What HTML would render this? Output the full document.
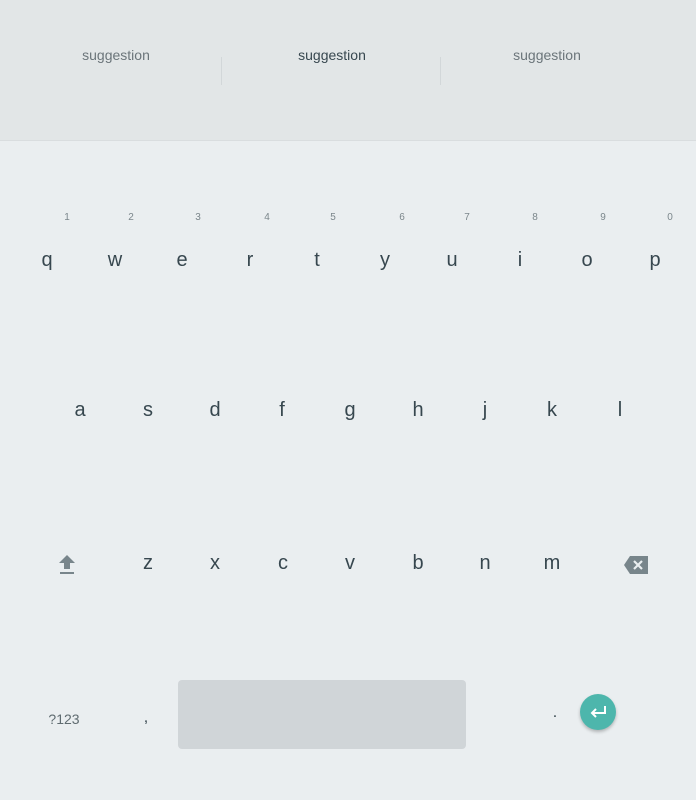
<!DOCTYPE html>
<html><head><style>
html,body{margin:0;padding:0}
body{width:696px;height:800px;position:relative;overflow:hidden;background:#eaeef0;font-family:"Liberation Sans",sans-serif;}
.top{position:absolute;left:0;top:0;width:696px;height:140px;background:#e2e6e7;border-bottom:1px solid #d9dddf}
.s{position:absolute;top:47px;font-size:14px;color:#6b757a;transform:translateX(-50%)}
.div{position:absolute;top:57px;width:1px;height:28px;background:#d2d7d9}
.k{position:absolute;font-size:20px;color:#37474f;transform:translate(-50%,-50%);line-height:1}
.n{position:absolute;font-size:10px;color:#7b868b;transform:translate(-50%,-50%);line-height:1}
</style></head><body>
<div class="top">
<div class="s" style="left:116px">suggestion</div>
<div class="s" style="left:332px;color:#37474f">suggestion</div>
<div class="s" style="left:547px">suggestion</div>
<div class="div" style="left:221px"></div>
<div class="div" style="left:440px"></div>
</div>
<div class="n" style="left:67px;top:218px">1</div>
<div class="n" style="left:131px;top:218px">2</div>
<div class="n" style="left:198px;top:218px">3</div>
<div class="n" style="left:267px;top:218px">4</div>
<div class="n" style="left:333px;top:218px">5</div>
<div class="n" style="left:402px;top:218px">6</div>
<div class="n" style="left:467px;top:218px">7</div>
<div class="n" style="left:535px;top:218px">8</div>
<div class="n" style="left:603px;top:218px">9</div>
<div class="n" style="left:670px;top:218px">0</div>

<div class="k" style="left:47px;top:260px">q</div>
<div class="k" style="left:115px;top:260px">w</div>
<div class="k" style="left:182px;top:260px">e</div>
<div class="k" style="left:250px;top:260px">r</div>
<div class="k" style="left:317px;top:260px">t</div>
<div class="k" style="left:385px;top:260px">y</div>
<div class="k" style="left:452px;top:260px">u</div>
<div class="k" style="left:520px;top:260px">i</div>
<div class="k" style="left:587px;top:260px">o</div>
<div class="k" style="left:655px;top:260px">p</div>

<div class="k" style="left:80px;top:410px">a</div>
<div class="k" style="left:148px;top:410px">s</div>
<div class="k" style="left:215px;top:410px">d</div>
<div class="k" style="left:282px;top:410px">f</div>
<div class="k" style="left:350px;top:410px">g</div>
<div class="k" style="left:418px;top:410px">h</div>
<div class="k" style="left:485px;top:410px">j</div>
<div class="k" style="left:552px;top:410px">k</div>
<div class="k" style="left:620px;top:410px">l</div>

<svg style="position:absolute;left:57px;top:554px" width="20" height="22" viewBox="0 0 20 22"><path d="M10 1 L18 9 L13 9 L13 15 L7 15 L7 9 L2 9 Z" fill="#78858b"/><rect x="3" y="18" width="14" height="2" fill="#78858b"/></svg>
<div class="k" style="left:148px;top:563px">z</div>
<div class="k" style="left:215px;top:563px">x</div>
<div class="k" style="left:283px;top:563px">c</div>
<div class="k" style="left:350px;top:563px">v</div>
<div class="k" style="left:418px;top:563px">b</div>
<div class="k" style="left:485px;top:563px">n</div>
<div class="k" style="left:552px;top:563px">m</div>
<svg style="position:absolute;left:624px;top:556px" width="25" height="18" viewBox="0 0 25 18"><path d="M6 0 H24 V18 H6 L0 9 Z" fill="#78858b"/><path d="M10 5 L18 13 M18 5 L10 13" stroke="#eaeef0" stroke-width="2.2"/></svg>

<div class="k" style="left:64px;top:719px;font-size:14px;color:#5f6b70">?123</div>
<div class="k" style="left:146px;top:718px;font-size:16px">,</div>
<div style="position:absolute;left:178px;top:680px;width:288px;height:69px;background:#d0d5d8;border-radius:4px"></div>
<div class="k" style="left:555px;top:713px;font-size:16px">.</div>
<div style="position:absolute;left:580px;top:694px;width:36px;height:36px;border-radius:50%;background:#4db6ac;box-shadow:0 2px 3px rgba(0,0,0,.25)"></div>
<svg style="position:absolute;left:588px;top:703px" width="20" height="18" viewBox="0 0 20 18"><path d="M17 3 V10 H4 M8 6 L4 10 L8 14" stroke="#fff" stroke-width="2" fill="none"/></svg>
</body></html>
